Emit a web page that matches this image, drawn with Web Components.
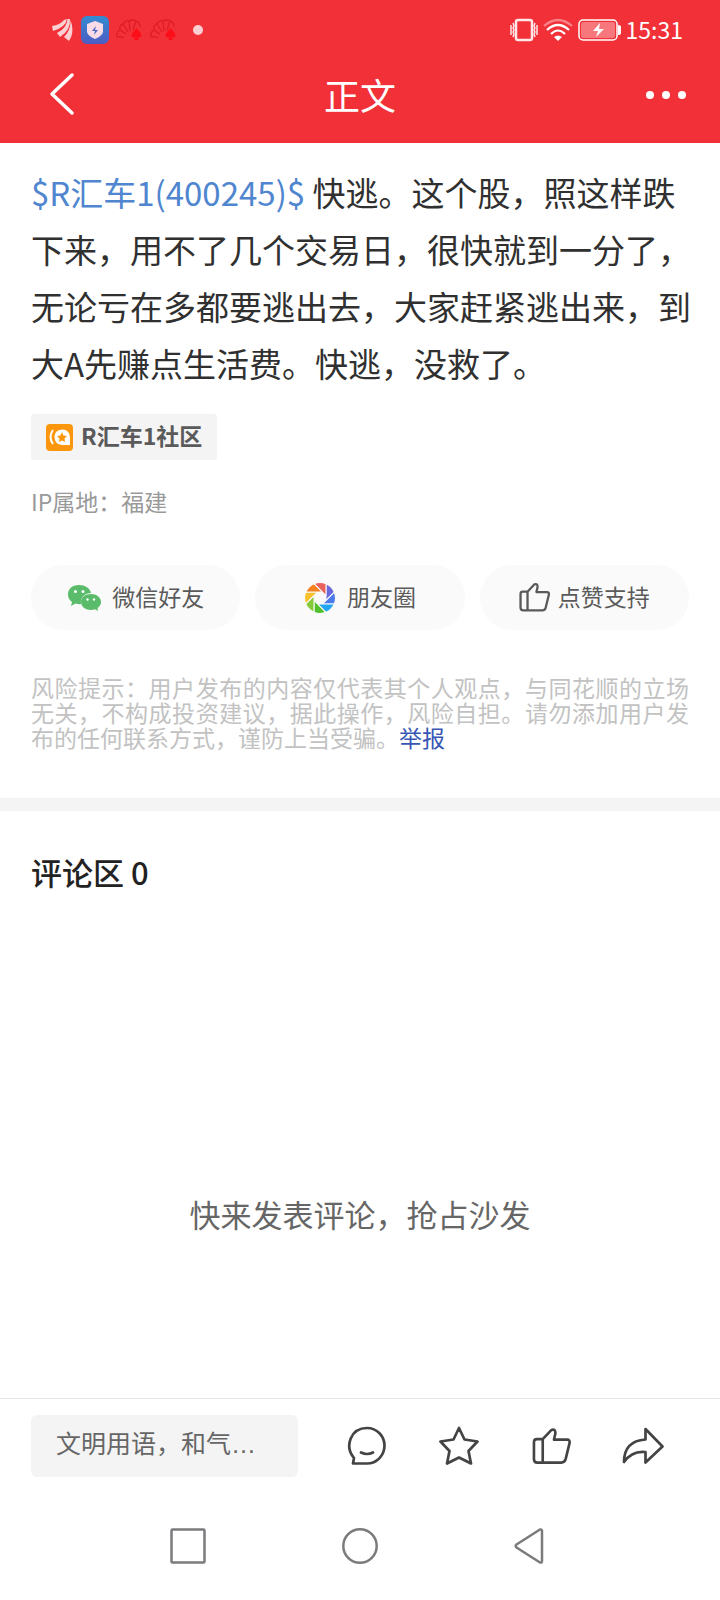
<!DOCTYPE html>
<html lang="zh-CN">
<head>
<meta charset="utf-8">
<meta name="viewport" content="width=device-width, initial-scale=1">
<title>正文</title>
<style>
  body {
    margin: 0;
    background: #fff;
    color: #303030;
    font-family: "Noto Sans CJK SC", sans-serif;
    font-size: 23px;
  }
</style>
</head>
<body>
<post-page>
  <status-bar slot="top" time="15:31"></status-bar>
  <nav-header slot="top">正文</nav-header>

  <post-body>
    <a slot="stock" href="#stock">$R汇车1(400245)$</a>
    快逃。这个股，照这样跌下来，用不了几个交易日，很快就到一分了，无论亏在多都要逃出去，大家赶紧逃出来，到大A先赚点生活费。快逃，没救了。
    <span slot="community">R汇车1社区</span>
    <span slot="place">IP属地：福建</span>
  </post-body>
  <share-row></share-row>
  <risk-note>风险提示：用户发布的内容仅代表其个人观点，与同花顺的立场无关，不构成投资建议，据此操作，风险自担。请勿添加用户发布的任何联系方式，谨防上当受骗。</risk-note>
  <comment-section count="0">快来发表评论，抢占沙发</comment-section>

  <action-bar slot="bottom" hint="文明用语，和气…"></action-bar>
  <system-nav slot="bottom"></system-nav>
</post-page>

<script>
'use strict';

// all elements share the same way of building their shadow dom
class BaseElement extends HTMLElement {
  connectedCallback() {
    if (!this.shadowRoot) {
      this.attachShadow({mode: 'open'});
      this.shadowRoot.innerHTML = this.render();
    }
  }
}

const resetButton = `
  button {
    margin: 0;
    padding: 0;
    border: 0;
    background: none;
    color: inherit;
    font: inherit;
    cursor: pointer;
  }
  svg { display: block; flex: none; }
`;

const thumb = (size, width) => `
  <svg width="${size}" height="${size}" viewBox="0 0 40 40" fill="none" stroke="currentColor" stroke-width="${width}" stroke-linejoin="round">
    <path d="M11 12.500H5Q2 12.500 2 15.500V33Q2 36.500 5.500 36.500H30Q33.500 36.500 34.500 33L38.500 16.500Q39 13 36 13H22.500L24 6.500Q24 1.500 20 3L11 12.500V36"/>
  </svg>`;

customElements.define('post-page', class extends BaseElement {
  render() {
    return `
      <style>
        :host { display: flex; flex-direction: column; min-height: 100vh; }
        header { background: #f23038; color: #fff; }
        main { flex: 1; display: flex; flex-direction: column; }
      </style>
      <header><slot name="top"></slot></header>
      <main><slot></slot></main>
      <footer><slot name="bottom"></slot></footer>`;
  }
});

customElements.define('status-bar', class extends BaseElement {
  render() {
    const fan = `
      <svg width="27" height="22" viewBox="0 0 27 22" fill="none" stroke="#e01c24" stroke-width="1.300">
        <path d="M8 19Q4 17 1 18Q0 13 4 11Q3 6 7 5Q9 1 13 2Q17 0 20 2Q24 3 24 8M4 11L10 15M7 5L12 13M13 2L14 12M20 2L17 11"/>
        <path d="M20.500 9Q26 15 25.500 17Q24 19.500 21.500 18L23 21H18L19.500 18Q17 19.500 15.500 17Q15 15 20.500 9Z" fill="#fc0f18" stroke="none"/>
      </svg>`;
    return `
      <style>
        :host { display: flex; align-items: center; justify-content: space-between; height: 60px; padding: 0 37px 0 52px; }
        div { display: flex; align-items: center; }
        .left { gap: 7px; }
        .right { gap: 5px; }
        .dot { width: 10px; height: 10px; margin-left: 9px; border-radius: 50%; background: #fccfd2; }
        .time { line-height: 30px; padding-bottom: 2px; }
        svg { display: block; }
      </style>
      <div class="left">
        <svg width="22" height="24" viewBox="0 0 22 24" fill="#fccfd2">
          <path d="M0 8Q8 7 12 2L15 1Q14 9 1 13Z"/>
          <path d="M5 15Q15 10 15.500 1L18 1Q19 12 8 19Z"/>
          <path d="M12 19Q19 12 18.500 2Q23 14 17 23Z"/>
        </svg>
        <svg width="28" height="28" viewBox="0 0 28 28">
          <defs><linearGradient id="g" x2="0" y2="1"><stop stop-color="#338bd0"/><stop offset="1" stop-color="#4e5cc4"/></linearGradient></defs>
          <rect width="28" height="28" rx="6" fill="url(#g)"/>
          <path d="M14 5L22 8V16Q21 20 14 23Q7 20 6 16V8Z" fill="#f7dce8"/>
          <path d="M15 10L11 15H14L13 19L17 14H14Z" fill="#4668c4"/>
        </svg>
        ${fan}
        ${fan}
        <span class="dot"></span>
      </div>
      <div class="right">
        <svg width="28" height="24" viewBox="0 0 28 24" fill="none" stroke="#ffe6e7">
          <rect x="6" y="2" width="16" height="20" rx="2" stroke-width="2.500"/>
          <path d="M3 5L4 8L3 10L4 12L3 14L4 16L3 19M1 7V17M25 5L24 8L25 10L24 12L25 14L24 16L25 19M27 7V17" stroke-width="1.500"/>
        </svg>
        <svg width="30" height="24" viewBox="0 0 30 24" fill="none" stroke="#fff" stroke-width="2.200">
          <path d="M1 8Q15 -4 29 8" opacity=".4"/>
          <path d="M4 12Q15 2 26 12M8 16Q15 9 22 16"/>
          <path d="M11 19Q15 16 19 19L15 23Z" fill="#fff" stroke="none"/>
        </svg>
        <svg width="43" height="24" viewBox="0 0 43 24">
          <rect x="1" y="2" width="38" height="20" rx="4" fill="none" stroke="#fff" stroke-width="1.500"/>
          <rect x="3" y="4" width="34" height="16" rx="2" fill="#fff" opacity=".35"/>
          <path d="M40 7Q43 7 43 9V15Q43 17 40 17Z" fill="#fff"/>
          <path d="M22 5L15 13H20L18 19L26 11H21Z" fill="#fff"/>
        </svg>
        <span class="time">${this.getAttribute('time')}</span>
      </div>`;
  }
});

customElements.define('nav-header', class extends BaseElement {
  render() {
    return `
      <style>
        ${resetButton}
        :host { display: grid; grid-template-columns: 1fr auto 1fr; align-items: center; height: 83px; padding: 0 31px; }
        h1 { margin: 0; padding-bottom: 16px; font-size: 36px; line-height: 64px; font-weight: 400; }
        .back { padding: 0 16px 16px; justify-self: start; }
        .more { padding-bottom: 14px; justify-self: end; }
      </style>
      <button class="back" aria-label="返回">
        <svg width="28" height="44" viewBox="0 0 28 44" fill="none" stroke="#fff" stroke-width="3.500" stroke-linecap="round" stroke-linejoin="round"><path d="M25 3L5 22L25 41"/></svg>
      </button>
      <h1><slot></slot></h1>
      <button class="more" aria-label="更多">
        <svg width="44" height="10" viewBox="0 0 44 10" fill="#fff"><circle cx="5" cy="5" r="4"/><circle cx="21" cy="5" r="4"/><circle cx="37" cy="5" r="4"/></svg>
      </button>`;
  }
});

customElements.define('post-body', class extends BaseElement {
  render() {
    return `
      <style>
        :host { display: block; padding: 21px 24px 0 31px; }
        p { margin: 0; font-size: 33px; line-height: 57px; }
        ::slotted(a) { color: #4f86cf; text-decoration: none; }
        .tag {
          display: inline-flex; align-items: center; gap: 8px;
          height: 46px; margin-top: 22px; padding: 0 15px;
          box-sizing: border-box; border-radius: 3px;
          background: #f4f4f4; color: #5a5a5a; font-weight: 700; text-decoration: none;
        }
        .tag span { padding-bottom: 4px; }
        .place { margin-top: 25px; padding-bottom: 2px; color: #999; line-height: 32px; }
      </style>
      <p><slot name="stock"></slot> <slot></slot></p>
      <a class="tag" href="#community">
        <svg width="27" height="27" viewBox="0 0 27 27">
          <rect width="27" height="27" rx="4" fill="#fc960c"/>
          <path d="M7 6Q2 13 7 20" fill="none" stroke="#fff" stroke-width="2"/>
          <path d="M16 5.500Q24 5.500 24 14V21H16Q8.500 20 8.500 13Q8.500 6 16 5.500Z" fill="#fff"/>
          <path d="M16 8L17.500 11.500L21 12L18.500 14.500L19 18L16 16.500L13 18L13.500 14.500L11 12L14.500 11.500Z" fill="#fc960c"/>
        </svg>
        <span><slot name="community"></slot></span>
      </a>
      <div class="place"><slot name="place"></slot></div>`;
  }
});

customElements.define('share-row', class extends BaseElement {
  render() {
    const colors = ['#6a68dc', '#4a7bea', '#22a6f2', '#4fc02c', '#86c93a', '#f6c12c', '#f58220', '#ea625c'];
    // one blade of the aperture, turned around the middle for each colour
    const blades = colors.map((c, i) =>
      `<path d="M6 0L10.250 -10.250A14.500 14.500 0 0 1 14.500 0L4.250 4.250Z" fill="${c}" stroke="#fafafa" stroke-width="1" transform="rotate(${i * 45 - 22})"/>`).join('');
    return `
      <style>
        ${resetButton}
        :host { display: grid; grid-template-columns: repeat(3, 1fr); gap: 15px; padding: 46px 31px 0; }
        button {
          display: flex; align-items: center; justify-content: center; gap: 11px;
          height: 65px; border-radius: 33px; background: #fafafa; color: #5a5a5a;
        }
        span { padding-bottom: 4px; }
        .like { gap: 8px; }
      </style>
      <button>
        <svg width="34" height="28" viewBox="0 0 34 28">
          <path d="M12 1C5 1 1 5 1 10.500Q1 15 5 18L4 22L8.500 19.500Q12 20.500 14 20C13 13 18 9 24 9C23 4 18 1 12 1Z" fill="#5abb6a"/>
          <path d="M24 10C18 10 14 13.500 14 18C14 23 19 26 24 26Q26 26 28 25.300L31 27L30.500 24Q34 21.500 34 18C34 13.500 29.500 10 24 10Z" fill="#5abb6a"/>
          <g fill="#fff"><circle cx="8.500" cy="7.500" r="1.500"/><circle cx="16" cy="7.500" r="1.500"/><circle cx="20.500" cy="15.500" r="1.200"/><circle cx="27" cy="15.500" r="1.200"/></g>
        </svg>
        <span>微信好友</span>
      </button>
      <button>
        <svg width="32" height="32" viewBox="-15 -15 30 30">${blades}</svg>
        <span>朋友圈</span>
      </button>
      <button class="like">${thumb(31, 3)}<span>点赞支持</span></button>`;
  }
});

customElements.define('risk-note', class extends BaseElement {
  render() {
    return `
      <style>
        :host { display: block; padding: 45px 31px 48px; color: #c2c2c2; }
        p { margin: 0; line-height: 25px; text-align: justify; }
        a { color: #3857b5; text-decoration: none; }
      </style>
      <p><slot></slot><a href="#report">举报</a></p>`;
  }
});

customElements.define('comment-section', class extends BaseElement {
  render() {
    return `
      <style>
        :host { flex: 1; display: flex; flex-direction: column; border-top: 13px solid #f4f4f4; font-size: 31px; line-height: 46px; }
        h2 { margin: 0; padding: 38px 31px 0; color: #222; font-size: 31px; font-weight: 500; }
        p { margin: auto; padding-top: 134px; color: #666; }
      </style>
      <h2>评论区 ${this.getAttribute('count')}</h2>
      <p><slot></slot></p>`;
  }
});

customElements.define('action-bar', class extends BaseElement {
  render() {
    return `
      <style>
        ${resetButton}
        :host { display: flex; gap: 23px; padding: 16px 31px 14px; border-top: 1px solid #e4e4e4; color: #444; }
        input {
          flex: 1; min-width: 0; height: 62px; box-sizing: border-box;
          padding: 0 25px 4px; border: 0; border-radius: 6px; background: #f4f4f4;
          font-family: "Liberation Sans", "Noto Sans CJK SC", sans-serif; font-size: 25px;
        }
        input::placeholder { color: #666; opacity: 1; }
        .icons { display: flex; }
        button { display: flex; align-items: center; justify-content: center; width: 92px; }
      </style>
      <input type="text" aria-label="发表评论" placeholder="${this.getAttribute('hint')}">
      <div class="icons">
        <button aria-label="评论">
          <svg width="40" height="40" viewBox="0 0 40 40" fill="none" stroke="currentColor" stroke-width="2.700" stroke-linecap="round" stroke-linejoin="round">
            <path d="M20 37.500H6L7 32C-3 20 4 2 20 2C30 2 37.500 10 37.500 19.500S30 37.500 20 37.500ZM14 26.500Q20 29.500 26 26.500"/>
          </svg>
        </button>
        <button aria-label="收藏">
          <svg width="40" height="40" viewBox="0 0 40 40" fill="none" stroke="currentColor" stroke-width="2.700" stroke-linejoin="round">
            <path d="M20 2L25.500 13.500L38.500 15.500L29.500 25L32 37.500L20 31.500L8 37.500L10.500 25L1.500 15.500L14.500 13.500Z"/>
          </svg>
        </button>
        <button aria-label="点赞">${thumb(39, 2.7)}</button>
        <button aria-label="分享">
          <svg width="42" height="40" viewBox="0 0 42 40" fill="none" stroke="currentColor" stroke-width="2.700" stroke-linejoin="round">
            <path d="M23.500 3L40.500 20.500L23.500 36.500V26Q10 24.500 2 36Q2 15 23.500 13.500Z"/>
          </svg>
        </button>
      </div>`;
  }
});

customElements.define('system-nav', class extends BaseElement {
  render() {
    return `
      <style>
        ${resetButton}
        :host { display: grid; grid-template-columns: repeat(3, 172px); justify-content: center; height: 109px; color: #7b7b7e; }
        button { display: flex; align-items: center; justify-content: center; }
        svg { fill: none; stroke: currentColor; stroke-width: 2.500; stroke-linejoin: round; }
      </style>
      <button aria-label="最近任务"><svg width="36" height="36" viewBox="0 0 36 36"><rect x="1.500" y="1.500" width="33" height="33" rx="1"/></svg></button>
      <button aria-label="主屏幕"><svg width="36" height="36" viewBox="0 0 36 36"><circle cx="18" cy="18" r="16.700"/></svg></button>
      <button aria-label="返回"><svg width="36" height="36" viewBox="0 0 36 36"><path d="M2.500 16.500L26 1.500Q28 1 28 3V33Q28 35 26 34.500L2.500 19.500Q1 18 2.500 16.500Z"/></svg></button>`;
  }
});
</script>
</body>
</html>
